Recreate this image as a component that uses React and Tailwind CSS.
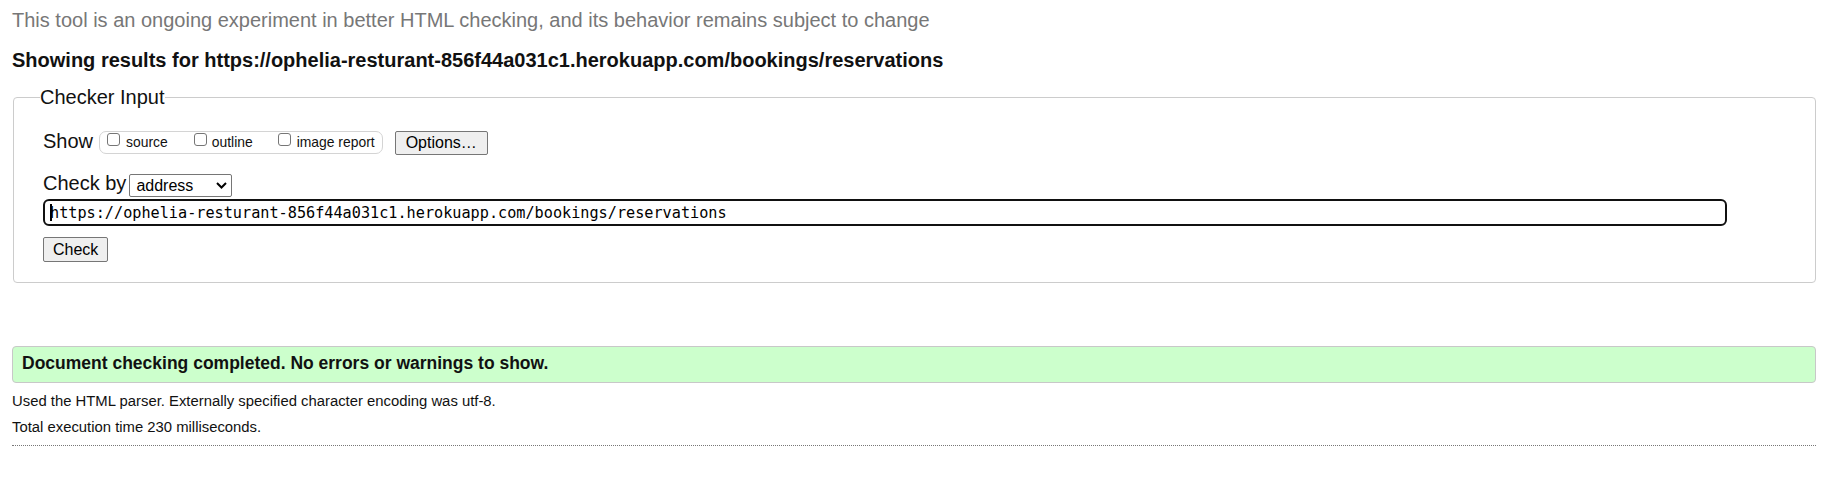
import React from "react";

const url = "https://ophelia-resturant-856f44a031c1.herokuapp.com/bookings/reservations";

const Box = () => (
  <span className="mt-[1px] block w-[13px] h-[13px] rounded-[3px] border border-[#767676] bg-white" />
);

export default function App() {
  return (
    <div className="min-h-screen bg-white pl-3 pr-[30px] font-['Liberation_Sans',Arial,sans-serif] text-black">
      <p className="pt-[9px] text-[20px] leading-[22px] text-[#777]">
        This tool is an ongoing experiment in better HTML checking, and its behavior remains subject to change
      </p>
      <p className="mt-[18px] text-[20px] leading-[22px] font-bold text-[#111]">
        Showing results for {url}
      </p>

      <fieldset className="mt-[15px] ml-px border border-[#ccc] rounded-[4px] pl-[29px] pr-4 pt-[22px] pb-[20px]">
        <legend className="-ml-[3px] text-[20px] leading-[22px] text-[#111]">Checker Input</legend>

        <div className="flex items-start">
          <span className="text-[20px] leading-[22px] text-[#111]">Show</span>
          <div className="ml-[6px] mt-px flex h-[23px] items-start rounded-[7px] border border-[#d4d4d4] pl-[7px] pr-[7px] text-[13.9px] leading-[21px] text-[#111]">
            <Box />
            <span className="ml-[6px]">source</span>
            <span className="ml-[26px]"><Box /></span>
            <span className="ml-[5px]">outline</span>
            <span className="ml-[25px]"><Box /></span>
            <span className="ml-[6px]">image report</span>
          </div>
          <button className="ml-[12px] mt-px h-[24px] rounded-[2px] border border-[#767676] bg-[#efefef] px-[10px] text-[16px] leading-[20px] text-black">
            Options…
          </button>
        </div>

        <div className="mt-[17px] flex items-start">
          <span className="text-[20px] leading-[22px] text-[#111]">Check by</span>
          <div className="ml-[3px] mt-[2px] flex h-[23px] w-[103px] items-center justify-between rounded-[2px] border border-[#767676] bg-white pl-[6px] pr-[4px] text-[16px] leading-[20px]">
            <span>address</span>
            <svg width="11" height="7" viewBox="0 0 11 7" fill="none">
              <path d="M1 1l4.5 4.5L10 1" stroke="#000" strokeWidth="2" />
            </svg>
          </div>
        </div>

        <div className="mt-[2px] flex h-[27px] w-[1684px] items-center rounded-[6px] border-2 border-[#111] bg-white pl-[5px] pt-[2px] font-['DejaVu_Sans_Mono',monospace] text-[15.2px] leading-[23px] text-black">
          <span className="relative">
            <span className="absolute left-0 top-[2px] h-[17px] w-[2px] bg-black" />
            {url}
          </span>
        </div>

        <button className="mt-[11px] h-[25px] rounded-[2px] border border-[#767676] bg-[#efefef] px-[9px] text-[16px] leading-[20px] text-black">
          Check
        </button>
      </fieldset>

      <div className="mt-[63px] h-[37px] rounded-[4px] border border-[#c8c8c8] bg-[#ccffcc] pl-[9px] pt-[5px] text-[17.5px] leading-[22px] font-bold text-[#111]">
        Document checking completed. No errors or warnings to show.
      </div>

      <p className="mt-[5px] text-[14.85px] leading-[26px] text-[#111]">
        Used the HTML parser. Externally specified character encoding was utf-8.
      </p>
      <p className="text-[14.85px] leading-[26px] text-[#111]">Total execution time 230 milliseconds.</p>
      <div className="mt-[5px] border-t border-dotted border-[#777]" />
    </div>
  );
}
